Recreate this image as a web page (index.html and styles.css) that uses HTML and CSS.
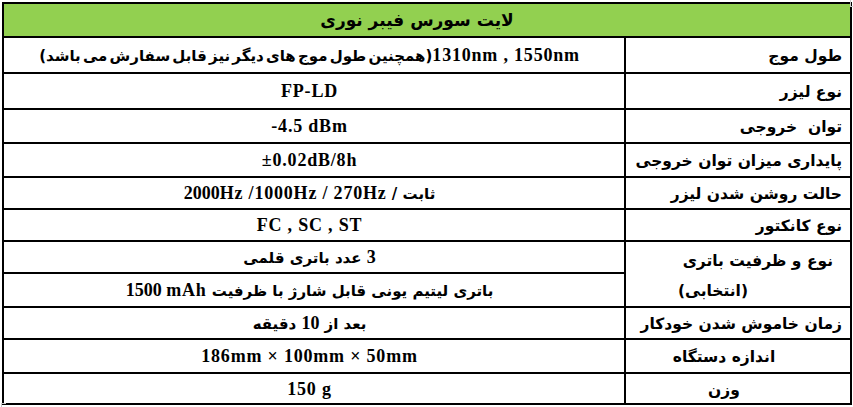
FILE: index.html
```html
<!DOCTYPE html>
<html lang="fa">
<head>
<meta charset="utf-8">
<title>لایت سورس فیبر نوری</title>
<link rel="stylesheet" href="styles.css">
</head>
<body>
<table class="spec" dir="rtl">
  <colgroup>
    <col class="col-label">
    <col class="col-value">
  </colgroup>
  <tr class="h34">
    <th class="head" colspan="2">لایت سورس فیبر نوری</th>
  </tr>
  <tr class="h36">
    <td class="label">طول موج</td>
    <td class="value"><span class="latin" dir="ltr">1310nm , 1550nm</span><span class="tight">(همچنین طول موج های دیگر نیز قابل سفارش می باشد)</span></td>
  </tr>
  <tr class="h36">
    <td class="label">نوع لیزر</td>
    <td class="value latin" dir="ltr">FP-LD</td>
  </tr>
  <tr class="h34">
    <td class="label">توان&nbsp; خروجی</td>
    <td class="value latin" dir="ltr">-4.5 dBm</td>
  </tr>
  <tr class="h34">
    <td class="label">پایداری میزان توان خروجی</td>
    <td class="value latin" dir="ltr">±0.02dB/8h</td>
  </tr>
  <tr class="h32">
    <td class="label">حالت روشن شدن لیزر</td>
    <td class="value">ثابت / <span class="latin" dir="ltr">2000Hz /1000Hz / 270Hz</span></td>
  </tr>
  <tr class="h32">
    <td class="label">نوع کانکتور</td>
    <td class="value latin" dir="ltr">FC , SC , ST</td>
  </tr>
  <tr class="h32">
    <td class="label battery" rowspan="2"><span class="bat1">نوع و ظرفیت باتری</span><span class="bat2">(انتخابی)</span></td>
    <td class="value"><span class="latin">3</span> عدد باتری قلمی</td>
  </tr>
  <tr class="h33">
    <td class="value">باتری لیتیم یونی قابل شارژ با ظرفیت <span class="latin" dir="ltr">1500 mAh</span></td>
  </tr>
  <tr class="h32">
    <td class="label">زمان خاموش شدن خودکار</td>
    <td class="value">بعد از <span class="latin">10</span> دقیقه</td>
  </tr>
  <tr class="h34">
    <td class="label center">اندازه دستگاه</td>
    <td class="value latin" dir="ltr">186mm × 100mm × 50mm</td>
  </tr>
  <tr class="h31">
    <td class="label center">وزن</td>
    <td class="value latin" dir="ltr">150 g</td>
  </tr>
</table>
</body>
</html>
```
FILE: styles.css
```css
html, body {
  margin: 0;
  padding: 0;
  background: #ffffff;
}

body {
  position: relative;
  padding: 2px 0 0 2px;
  min-height: 405px;
}

/* faint crop marks at the page corners */
body::before,
body::after {
  content: "";
  position: absolute;
  width: 4px;
  height: 6px;
}

body::before {
  top: 0;
  left: 850px;
  border-left: 1px solid #c8c8c8;
  border-bottom: 1px solid #c8c8c8;
}

body::after {
  top: 403px;
  left: 1px;
  border-left: 1px solid #c8c8c8;
  border-top: 1px solid #c8c8c8;
}

.spec {
  border-collapse: collapse;
  width: 848px;
  table-layout: fixed;
  font-family: "DejaVu Sans", "Liberation Sans", sans-serif;
  font-weight: bold;
  color: #000;
}

.col-label { width: 226px; }
.col-value { width: 622px; }

.spec th,
.spec td {
  border: 2px solid #000;
  padding: 0;
  vertical-align: middle;
  white-space: nowrap;
  overflow: hidden;
  line-height: 20px;
}

.h31 { height: 31px; }
.h32 { height: 32px; }
.h33 { height: 33px; }
.h34 { height: 34px; }
.h36 { height: 36px; }

.spec .head {
  background: #92d050;
  font-size: 17px;
  text-align: center;
  padding-right: 20px;
}

.spec .label {
  font-size: 15.5px;
  text-align: right;
  padding-right: 8px;
  padding-top: 2px;
}

.spec .label.center {
  text-align: center;
  padding-right: 28px;
}

.spec .battery {
  vertical-align: top;
  padding-top: 4px;
  padding-right: 0;
  line-height: 30px;
}

.bat1,
.bat2 {
  display: block;
  text-align: right;
}

.bat1 {
  padding-right: 17px;
}

.bat2 {
  padding-right: 102px;
}

.spec .value {
  font-size: 15px;
  text-align: center;
  padding-right: 9px;
}

.tight {
  word-spacing: -3px;
}

.spec .latin {
  font-family: "Liberation Serif", serif;
  font-size: 18px;
  letter-spacing: 0.8px;
}
```
